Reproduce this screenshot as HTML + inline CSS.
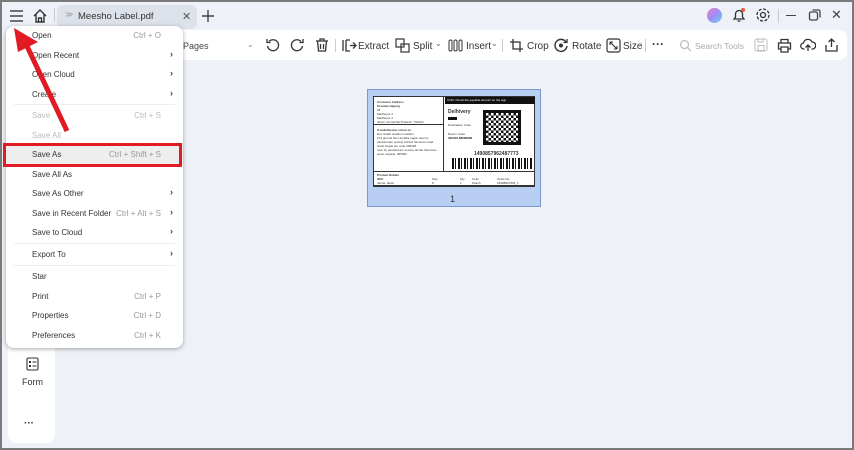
<!DOCTYPE html>
<html><head><style>
*{margin:0;padding:0;box-sizing:border-box}
body{width:854px;height:450px;overflow:hidden;font-family:"Liberation Sans",sans-serif;background:#7a7a7a;position:relative}
.win{position:absolute;left:2px;top:2px;width:850px;height:446px;background:#eef2f8}
.abs{position:absolute}
.t{position:absolute;font-size:10px;color:#333;white-space:nowrap}
.mi{position:absolute;left:26px;font-size:8px;color:#333;white-space:nowrap}
.sc{position:absolute;right:22px;font-size:8px;color:#999;white-space:nowrap}
.ar{position:absolute;right:10px;font-size:9px;color:#444;font-weight:bold}
.dis{color:#bbb}
.sep{position:absolute;left:8px;right:8px;height:1px;background:#eee}
svg{position:absolute}
.lbl div{position:absolute;white-space:nowrap}
</style></head><body>
<div class="win">
<svg style="left:7px;top:7px" width="16" height="14"><path d="M1 2h13M1 7h13M1 12h13" stroke="#444" stroke-width="1.5"/></svg>
<svg style="left:30px;top:6px" width="16" height="16"><path d="M2 8L8 2l6 6M4 6.5V14h8V6.5M6.5 14v-4h3v4" stroke="#333" stroke-width="1.4" fill="none"/></svg>
<div class="abs" style="left:52px;top:6px;width:1px;height:14px;background:#ccc"></div>
<div class="abs" style="left:55px;top:3px;width:140px;height:24px;background:#dde2ea;border-radius:6px"></div>
<div class="t" style="left:63px;top:8px;font-size:8px;color:#999">≫</div>
<div class="t" style="left:76px;top:9px;font-size:9.5px">Meesho Label.pdf</div>
<div class="t" style="left:180px;top:8px;font-size:11px;color:#555">✕</div>
<svg style="left:199px;top:7px" width="14" height="14"><path d="M7 1v12M1 7h12" stroke="#444" stroke-width="1.4"/></svg>
<div class="abs" style="left:705px;top:6px;width:15px;height:15px;border-radius:50%;background:linear-gradient(135deg,#f07ac0,#9b8ff5,#6cd0f5)"></div>
<svg style="left:729px;top:5px" width="16" height="16"><path d="M3 12h10l-1.5-2V7a3.5 3.5 0 0 0-7 0v3z M6.5 14h3" stroke="#333" stroke-width="1.3" fill="none"/><circle cx="12" cy="3" r="2" fill="#e53"/></svg>
<svg style="left:753px;top:5px" width="16" height="16"><circle cx="8" cy="8" r="2.5" stroke="#333" stroke-width="1.3" fill="none"/><circle cx="8" cy="8" r="6" stroke="#333" stroke-width="1.3" fill="none" stroke-dasharray="3 1.7"/></svg>
<div class="abs" style="left:776px;top:7px;width:1px;height:14px;background:#ccc"></div>
<div class="abs" style="left:784px;top:13px;width:10px;height:1.3px;background:#444"></div>
<svg style="left:806px;top:6px" width="14" height="14"><rect x="1.5" y="4" width="8" height="8" rx="1.5" stroke="#444" stroke-width="1.3" fill="none"/><path d="M4.5 2h6a1.5 1.5 0 0 1 1.5 1.5v6" stroke="#444" stroke-width="1.3" fill="none"/></svg>
<div class="t" style="left:829px;top:5px;font-size:13px;color:#444">✕</div>

<div class="abs" style="left:168px;top:28px;width:677px;height:30px;background:#fff;border-radius:8px"></div>
<div class="t" style="left:181px;top:39px;font-size:9px;color:#444">Pages</div>
<div class="t" style="left:245px;top:38px;font-size:8px;color:#888">⌄</div>
<svg style="left:263px;top:35px" width="16" height="16"><path d="M4 4.5A5.5 5.5 0 1 1 2.6 9" stroke="#333" stroke-width="1.3" fill="none"/><path d="M2 2v3.5h3.5" stroke="#333" stroke-width="1.3" fill="none"/></svg>
<svg style="left:287px;top:35px" width="16" height="16"><path d="M12 4.5A5.5 5.5 0 1 0 13.4 9" stroke="#333" stroke-width="1.3" fill="none"/><path d="M14 2v3.5h-3.5" stroke="#333" stroke-width="1.3" fill="none"/></svg>
<svg style="left:312px;top:35px" width="16" height="16"><path d="M2 4h12M6 4V2h4v2M3.5 4l1 10h7l1-10M6.5 7v5M9.5 7v5" stroke="#333" stroke-width="1.3" fill="none"/></svg>
<div class="abs" style="left:333px;top:37px;width:1px;height:13px;background:#ccc"></div>
<svg style="left:339px;top:36px" width="16" height="15"><path d="M2 2v11M5 2v11h4M5 2h4M9 7.5h6M12 4.5l3 3-3 3" stroke="#333" stroke-width="1.3" fill="none"/></svg>
<div class="t" style="left:356px;top:39px;font-size:10px">Extract</div>
<svg style="left:393px;top:36px" width="16" height="15"><rect x="1" y="1" width="8" height="8" stroke="#333" stroke-width="1.2" fill="none"/><rect x="6" y="6" width="8" height="8" stroke="#333" stroke-width="1.2" fill="none"/></svg>
<div class="t" style="left:411px;top:39px;font-size:10px">Split</div>
<div class="t" style="left:433px;top:37px;font-size:8px;color:#666">⌄</div>
<svg style="left:446px;top:36px" width="15" height="15"><rect x="1" y="2" width="3" height="11" rx="1.5" stroke="#333" fill="none"/><rect x="6" y="2" width="3" height="11" rx="1.5" stroke="#333" fill="none"/><rect x="11" y="2" width="3" height="11" rx="1.5" stroke="#333" fill="none"/></svg>
<div class="t" style="left:464px;top:39px;font-size:10px">Insert</div>
<div class="t" style="left:489px;top:37px;font-size:8px;color:#666">⌄</div>
<div class="abs" style="left:500px;top:37px;width:1px;height:13px;background:#ccc"></div>
<svg style="left:507px;top:36px" width="15" height="15"><path d="M4 1v10h10M1 4h10v10" stroke="#333" stroke-width="1.3" fill="none"/></svg>
<div class="t" style="left:525px;top:39px;font-size:10px">Crop</div>
<svg style="left:551px;top:35px" width="16" height="16"><path d="M13 5A6 6 0 1 0 14 9" stroke="#333" stroke-width="1.4" fill="none"/><circle cx="8" cy="8.5" r="2" fill="#333"/><path d="M14 2v3.5h-3.5" stroke="#333" stroke-width="1.3" fill="none"/></svg>
<div class="t" style="left:570px;top:39px;font-size:10px">Rotate</div>
<svg style="left:604px;top:36px" width="15" height="15"><rect x="1" y="1" width="13" height="13" rx="2" stroke="#333" stroke-width="1.2" fill="none"/><path d="M4 4l7 7M4 4h3M4 4v3M11 11H8M11 11V8" stroke="#333" stroke-width="1.1" fill="none"/></svg>
<div class="t" style="left:621px;top:39px;font-size:10px">Size</div>
<div class="abs" style="left:643px;top:37px;width:1px;height:13px;background:#ccc"></div>
<div class="t" style="left:650px;top:35px;font-size:12px;font-weight:bold">···</div>
<svg style="left:677px;top:37px" width="13" height="13"><circle cx="5.5" cy="5.5" r="4" stroke="#bbb" stroke-width="1.2" fill="none"/><path d="M8.5 8.5L12 12" stroke="#bbb" stroke-width="1.2"/></svg>
<div class="t" style="left:693px;top:39px;font-size:8.5px;color:#aaa">Search Tools</div>
<svg style="left:752px;top:36px" width="14" height="14"><rect x="1" y="1" width="12" height="12" rx="2" stroke="#bbb" fill="none"/><rect x="4" y="7.5" width="6" height="5" stroke="#bbb" fill="none"/><path d="M4 1v3h5V1" stroke="#bbb" fill="none"/></svg>
<svg style="left:775px;top:36px" width="15" height="15"><path d="M4 5V1.5h7V5M4 11H1.5V5h12v6H11M4 9h7v5H4z" stroke="#333" stroke-width="1.3" fill="none"/></svg>
<svg style="left:798px;top:35px" width="16" height="16"><path d="M4.5 12H4a3 3 0 0 1-.5-6A4.5 4.5 0 0 1 12 5a3 3 0 0 1 .5 7H11.5M8 14V8M5.5 10.5L8 8l2.5 2.5" stroke="#333" stroke-width="1.3" fill="none"/></svg>
<svg style="left:822px;top:35px" width="15" height="16"><path d="M7.5 10V2M4.5 5l3-3 3 3M2 8v6h11V8" stroke="#333" stroke-width="1.3" fill="none"/></svg>

<div class="abs" style="left:6px;top:58px;width:47px;height:383px;background:#fff;border-radius:8px"></div>
<svg style="left:24px;top:355px" width="13" height="14"><rect x="1" y="1" width="11" height="12" rx="1.5" stroke="#333" stroke-width="1.1" fill="none"/><rect x="3" y="4" width="2" height="2" fill="#333"/><rect x="3" y="8" width="2" height="2" fill="#333"/><path d="M6.5 5h4M6.5 9h4" stroke="#333"/></svg>
<div class="t" style="left:20px;top:375px;font-size:9px">Form</div>
<div class="t" style="left:22px;top:416px;font-size:10px;font-weight:bold">···</div>

<div class="abs" style="left:365px;top:87px;width:174px;height:118px;background:#b8cef2;border:1px solid #7a98cc"></div>
<div class="abs lbl" style="left:371px;top:94px;width:162px;height:91px;background:#fff;border:1px solid #333;font-size:3px;color:#333">
 <div style="left:0;top:0;width:70px;height:28px;border-right:1px solid #333;border-bottom:1px solid #333"></div>
 <div style="left:3px;top:3px;font-weight:bold">Customer Address</div>
 <div style="left:3px;top:7px;font-weight:bold">Poonam Hajong</div>
 <div style="left:3px;top:11px">28</div>
 <div style="left:3px;top:15px">Madhupur 2</div>
 <div style="left:3px;top:19px">Madhupur 2</div>
 <div style="left:3px;top:23px">Jiboni, Arunachal Pradesh, 790102</div>
 <div style="left:0;top:28px;width:70px;height:46px;border-right:1px solid #333"></div>
 <div style="left:3px;top:31px;font-weight:bold">If undelivered, return to:</div>
 <div style="left:3px;top:35px">shiv shakti creation masshu</div>
 <div style="left:3px;top:39px">174 ground floor ambika nagar near by</div>
 <div style="left:3px;top:43px">parashuram society behind hanuman road</div>
 <div style="left:3px;top:47px">Surat Gujrat pin code 395006</div>
 <div style="left:3px;top:51px">near by parashuram society tamba hanuman</div>
 <div style="left:3px;top:55px">surat, Gujarat, 395006</div>
 <div style="left:71px;top:0;width:90px;height:7px;background:#111;color:#fff;padding-left:2px;line-height:7px">COD: Check the payable amount on the app</div>
 <div style="left:74px;top:12px;font-size:5px;font-weight:bold">Delhivery</div>
 <div style="left:74px;top:20px;width:9px;height:3px;background:#111"></div>
 <div style="left:74px;top:26px">Destination Code</div>
 <div style="left:74px;top:35px">Return Code</div>
 <div style="left:74px;top:39px;font-weight:bold">395006,88888888</div>
 <div style="left:109px;top:13px;width:38px;height:35px;border:3px solid #111;background:repeating-conic-gradient(#111 0 25%,#fff 0 50%) 0 0/5px 5px"></div>
 <div style="left:100px;top:54px;font-size:5px;font-weight:bold">1490857962487773</div>
 <div style="left:78px;top:61px;width:80px;height:11px;background:repeating-linear-gradient(90deg,#111 0 2px,#fff 2px 3px,#111 3px 4px,#fff 4px 6px)"></div>
 <div style="left:0;top:74px;width:160px;border-top:1px solid #333"></div>
 <div style="left:3px;top:76px;font-weight:bold">Product Details</div>
 <div style="left:3px;top:80px;font-weight:bold">SKU</div><div style="left:58px;top:80px">Size</div><div style="left:86px;top:80px">Qty</div><div style="left:98px;top:80px">Color</div><div style="left:123px;top:80px">Order No.</div>
 <div style="left:3px;top:84px">Janna, black</div><div style="left:58px;top:84px">8</div><div style="left:86px;top:84px">1</div><div style="left:98px;top:84px">Peach</div><div style="left:123px;top:84px">18298827836_1</div>
 <div style="left:0;top:88px;width:160px;border-top:1px solid #333"></div>
</div>
<div class="t" style="left:448px;top:192px;font-size:9px">1</div>

<div class="abs" style="left:4px;top:24px;width:177px;height:322px;background:#fff;border-radius:8px;box-shadow:0 1px 4px rgba(0,0,0,.35)">
 <div class="mi" style="top:5px">Open</div><div class="sc" style="top:5px">Ctrl + O</div>
 <div class="mi" style="top:25px">Open Recent</div><div class="ar" style="top:23px">›</div>
 <div class="mi" style="top:44px">Open Cloud</div><div class="ar" style="top:42px">›</div>
 <div class="mi" style="top:64px">Create</div><div class="ar" style="top:62px">›</div>
 <div class="sep" style="top:78px"></div>
 <div class="mi dis" style="top:85px">Save</div><div class="sc dis" style="top:85px">Ctrl + S</div>
 <div class="mi dis" style="top:105px">Save All</div>
 <div class="abs" style="left:0;top:117px;width:177px;height:22px;background:#eee"></div>
 <div class="mi" style="top:124px">Save As</div><div class="sc" style="top:124px">Ctrl + Shift + S</div>
 <div class="mi" style="top:144px">Save All As</div>
 <div class="mi" style="top:163px">Save As Other</div><div class="ar" style="top:161px">›</div>
 <div class="mi" style="top:183px">Save in Recent Folder</div><div class="sc" style="top:183px">Ctrl + Alt + S</div><div class="ar" style="top:181px">›</div>
 <div class="mi" style="top:202px">Save to Cloud</div><div class="ar" style="top:200px">›</div>
 <div class="sep" style="top:217px"></div>
 <div class="mi" style="top:224px">Export To</div><div class="ar" style="top:222px">›</div>
 <div class="sep" style="top:239px"></div>
 <div class="mi" style="top:246px">Star</div>
 <div class="mi" style="top:266px">Print</div><div class="sc" style="top:266px">Ctrl + P</div>
 <div class="mi" style="top:285px">Properties</div><div class="sc" style="top:285px">Ctrl + D</div>
 <div class="mi" style="top:305px">Preferences</div><div class="sc" style="top:305px">Ctrl + K</div>
</div>
<div class="abs" style="left:1px;top:141px;width:179px;height:24px;border:3px solid #e01b24"></div>
<svg style="left:0;top:0" width="100" height="140"><path d="M65 129L24 42" stroke="#e01b24" stroke-width="5"/><path d="M12 26L36 40L16 50Z" fill="#e01b24"/></svg>
</div>
</body></html>
